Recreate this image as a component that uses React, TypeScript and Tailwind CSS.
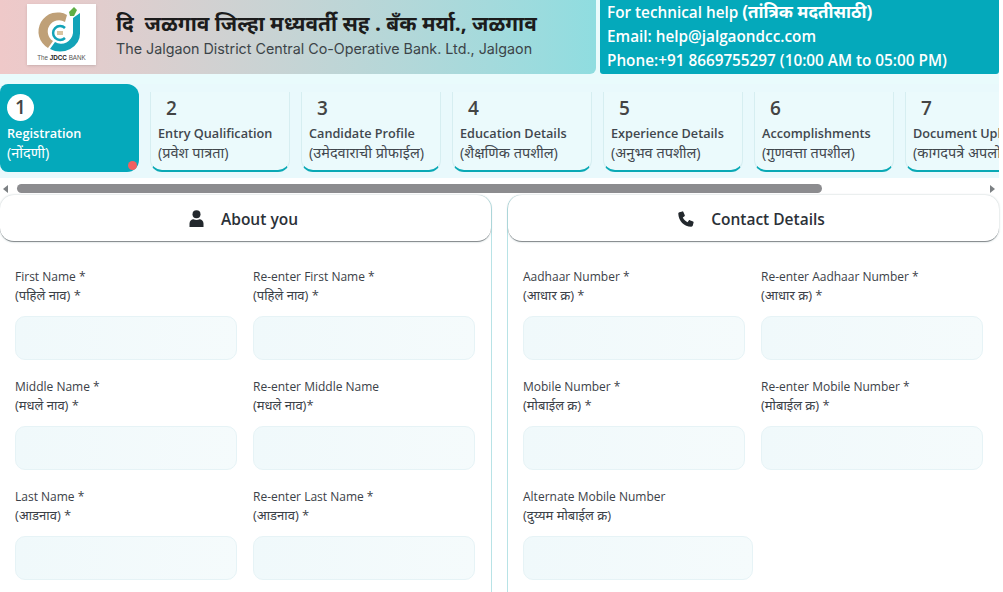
import React from 'react';

const steps = [
  { n: 1, en: 'Registration', mr: '(नोंदणी)' },
  { n: 2, en: 'Entry Qualification', mr: '(प्रवेश पात्रता)' },
  { n: 3, en: 'Candidate Profile', mr: '(उमेदवाराची प्रोफाईल)' },
  { n: 4, en: 'Education Details', mr: '(शैक्षणिक तपशील)' },
  { n: 5, en: 'Experience Details', mr: '(अनुभव तपशील)' },
  { n: 6, en: 'Accomplishments', mr: '(गुणवत्ता तपशील)' },
  { n: 7, en: 'Document Upload', mr: '(कागदपत्रे अपलोड)' },
];

const aboutFields = [
  ['First Name *', '(पहिले नाव) *'],
  ['Re-enter First Name *', '(पहिले नाव) *'],
  ['Middle Name *', '(मधले नाव) *'],
  ['Re-enter Middle Name', '(मधले नाव)*'],
  ['Last Name *', '(आडनाव) *'],
  ['Re-enter Last Name *', '(आडनाव) *'],
];

const contactFields = [
  ['Aadhaar Number *', '(आधार क्र) *'],
  ['Re-enter Aadhaar Number *', '(आधार क्र) *'],
  ['Mobile Number *', '(मोबाईल क्र) *'],
  ['Re-enter Mobile Number *', '(मोबाईल क्र) *'],
];

const Field = ({ en, mr, wide }: { en: string; mr: string; wide?: boolean }) => (
  <div className={wide ? 'w-[230px]' : ''}>
    <div className="text-[12px] leading-[19px] text-[#3b4148] whitespace-nowrap">{en}</div>
    <div className="text-[13px] leading-[19px] text-[#3b4148] whitespace-nowrap">{mr}</div>
    <div className="mt-[11px] h-[44px] rounded-[10px] border border-[#e6f3f6] bg-gradient-to-r from-[#f0f9fb] to-[#f5fbfc]" />
  </div>
);

const Logo = () => (
  <div className="w-[69px] h-[61px] mt-[4px] bg-white shadow-sm flex flex-col items-center shrink-0">
    <svg width="69" height="50" viewBox="0 0 69 50">
      <path d="M40 11 A19 19 0 0 0 21 44 L26 37 A11 11 0 0 1 38 18 Z" fill="#bfa077" />
      <path d="M53 9 L53 29 A20 18 0 0 1 23 45 L28 38 A12 12 0 0 0 46 29 L46 14 Z" fill="#13a3b8" />
      <path d="M38 24 A7 7 0 1 0 38 34" fill="none" stroke="#13a3b8" strokeWidth="2.5" />
      <rect x="30" y="27" width="6" height="4" fill="#d9c3a0" />
      <path d="M43 12 L42 8 L47 3 L50 6 L47 12 Z" fill="#5fae45" />
    </svg>
    <div className="text-[6.3px] leading-[8px] text-[#555] font-['Liberation_Sans',sans-serif] whitespace-nowrap">
      The <b className="text-[#222]">JDCC</b> BANK
    </div>
  </div>
);

const PanelHead = ({ icon, title }: { icon: React.ReactNode; title: string }) => (
  <div className="h-[47px] rounded-[14px] bg-white border-b border-[#8a8f92] shadow-[0_0_2px_rgba(90,120,125,0.45)] flex items-center justify-center gap-[17px] pr-[4px] pt-[3px]">
    {icon}
    <span className="text-[15.5px] font-semibold text-[#2b3138]">{title}</span>
  </div>
);

const UserIcon = () => (
  <svg width="15" height="17" viewBox="0 0 15 17" fill="#23282d" className="-mt-[2px]">
    <circle cx="7.5" cy="4.2" r="4" />
    <path d="M0.5 17 V13.5 C0.5 11 2.5 9.3 4.5 9.3 C6 10.2 9 10.2 10.5 9.3 C12.5 9.3 14.5 11 14.5 13.5 V17 Z" />
  </svg>
);

const PhoneIcon = () => (
  <svg width="16" height="16" viewBox="0 0 16 16" fill="#23282d" className="-mt-[2px]">
    <path d="M4.4 0.4 L1.4 1.2 C0.7 1.4 0.3 2 0.3 2.7 C0.5 9.9 6.1 15.5 13.3 15.7 C14 15.7 14.6 15.3 14.8 14.6 L15.6 11.6 C15.7 11.2 15.5 10.8 15.1 10.6 L11.8 9.2 C11.4 9 11 9.2 10.8 9.5 L9.5 11.2 C7.5 10.2 5.8 8.5 4.8 6.5 L6.5 5.2 C6.8 5 7 4.6 6.8 4.2 L5.4 0.9 C5.2 0.5 4.8 0.3 4.4 0.4 Z" />
  </svg>
);

export default function App() {
  return (
    <div className="w-[1003px] h-[592px] overflow-hidden bg-white font-['Open_Sans','Noto_Sans','Noto_Sans_Devanagari',sans-serif]">
      <div className="w-[999px]">
        <div className="h-[84px] bg-[#e9fbfc] flex gap-1 items-start">
          <div className="w-[596px] h-[74px] rounded-br-[6px] bg-gradient-to-r from-[#efc9c9] to-[#8fdde0] flex items-start pl-[27px] gap-[20px]">
            <Logo />
            <div>
              <div className="mt-[8px] text-[20.8px] leading-[30px] font-bold text-[#1c1c1c] whitespace-pre">दि  जळगाव जिल्हा मध्यवर्ती सह . बँक मर्या., जळगाव</div>
              <div className="text-[14.3px] leading-[20px] mt-[1px] text-[#3c4448] font-['Inter',sans-serif] whitespace-nowrap">The Jalgaon District Central Co-Operative Bank. Ltd., Jalgaon</div>
            </div>
          </div>
          <div className="flex-1 h-[74px] rounded-b-[3px] bg-[#04a9bb] pl-[7px] text-white text-[15.3px] leading-[24px] font-semibold whitespace-nowrap">
            <div>For technical help <span className="text-[17px] font-bold">(तांत्रिक मदतीसाठी)</span></div>
            <div>Email: help@jalgaondcc.com</div>
            <div>Phone:+91 8669755297 (10:00 AM to 05:00 PM)</div>
          </div>
        </div>

        <div className="h-[94px] bg-[#e9f9fc] flex items-end gap-[11px] overflow-hidden pb-[6px]">
          {steps.map((s) =>
            s.n === 1 ? (
              <div key={s.n} className="relative w-[139px] h-[88px] shrink-0 rounded-r-[12px] rounded-l-[8px] bg-[#04a9bb] pl-[7px] pt-[10px] text-white">
                <div className="w-[27px] h-[27px] rounded-full bg-white text-[#444] text-[19px] font-semibold flex items-center justify-center">1</div>
                <div className="mt-[2px] text-[12.7px] leading-[20px] font-semibold">{s.en}</div>
                <div className="text-[14.5px] leading-[20px]">{s.mr}</div>
                <span className="absolute right-[2px] bottom-[2px] w-[9px] h-[9px] rounded-full bg-[#f26060]" />
              </div>
            ) : (
              <div key={s.n} className="w-[140px] h-[80px] shrink-0 rounded-b-[12px] border-b-2 border-[#0aa9b5] border-x border-x-[#d6eef1] pl-[7px] pt-[3px] whitespace-nowrap overflow-hidden bg-[#ebfafc]">
                <div className="h-[27px] pl-[8px] text-[19px] leading-[27px] font-semibold text-[#444]">{s.n}</div>
                <div className="mt-[1px] text-[12.7px] leading-[20px] font-semibold text-[#41474e]">{s.en}</div>
                <div className="text-[14.5px] leading-[20px] text-[#41474e]">{s.mr}</div>
              </div>
            ),
          )}
        </div>

        <div className="h-[17px] flex items-center pl-[3px] pr-[4px] pt-[4px] bg-white">
          <span className="w-0 h-0 border-y-[4px] border-y-transparent border-r-[5px] border-r-[#7c8083]" />
          <div className="flex-1 pl-[9px]">
            <div className="w-[805px] h-[9px] rounded-full bg-[#8c8c8f]" />
          </div>
          <span className="w-0 h-0 border-y-[4px] border-y-transparent border-l-[5px] border-l-[#7c8083]" />
        </div>

        <div className="grid grid-cols-[492px_492px] gap-[15px] bg-white">
          <section className="h-[400px] rounded-t-[14px] border-r border-[#b8e3e6]">
            <PanelHead icon={<UserIcon />} title="About you" />
            <div className="grid grid-cols-[222px_222px] gap-x-[16px] gap-y-[17px] pl-[15px] pt-[25px]">
              {aboutFields.map(([en, mr]) => (
                <Field key={en} en={en} mr={mr} />
              ))}
            </div>
          </section>
          <section className="h-[400px] rounded-t-[14px] border-l border-[#b8e3e6]">
            <PanelHead icon={<PhoneIcon />} title="Contact Details" />
            <div className="grid grid-cols-[222px_222px] gap-x-[16px] gap-y-[17px] pl-[15px] pt-[25px]">
              {contactFields.map(([en, mr]) => (
                <Field key={en} en={en} mr={mr} />
              ))}
              <Field en="Alternate Mobile Number" mr="(दुय्यम मोबाईल क्र)" wide />
            </div>
          </section>
        </div>
      </div>
    </div>
  );
}
